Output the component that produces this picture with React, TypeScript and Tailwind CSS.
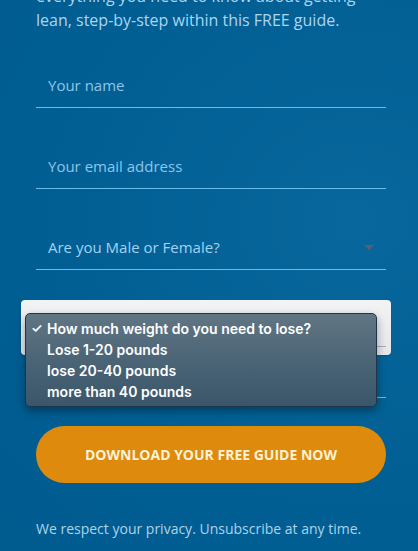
import { useState } from "react";

const weightOptions = [
    "How much weight do you need to lose?",
    "Lose 1-20 pounds",
    "lose 20-40 pounds",
    "more than 40 pounds",
];

export default function App() {
    const [name, setName] = useState("");
    const [email, setEmail] = useState("");
    const [gender, setGender] = useState("");

    return (
        <div
            className="min-h-screen w-full overflow-hidden bg-[radial-gradient(ellipse_at_85%_40%,#08679c_0%,#015f94_55%,#005b8f_100%)] pl-9 pr-8"
            style={{ fontFamily: '"Open Sans", "Noto Sans", sans-serif' }}
        >
            <p className="-mt-[16px] text-[16px] leading-6 text-[#acd5f0]">
                everything you need to know about getting lean, step-by-step within this FREE guide.
            </p>

            <form className="mt-[31px] flex flex-col" onSubmit={(e) => e.preventDefault()}>
                <input
                    type="text"
                    value={name}
                    onChange={(e) => setName(e.target.value)}
                    placeholder="Your name"
                    className="h-[45px] w-full border-b border-[#6cbbea] bg-transparent pl-3 text-[15px] text-[#cfe8f8] outline-none placeholder:text-[#8cc6ea]"
                />
                <input
                    type="email"
                    value={email}
                    onChange={(e) => setEmail(e.target.value)}
                    placeholder="Your email address"
                    className="mt-9 h-[45px] w-full border-b border-[#6cbbea] bg-transparent pl-3 text-[15px] text-[#cfe8f8] outline-none placeholder:text-[#8cc6ea]"
                />
                <div className="relative mt-9 h-[45px] border-b border-[#6cbbea]">
                    <select
                        value={gender}
                        onChange={(e) => setGender(e.target.value)}
                        className="h-full w-full appearance-none bg-transparent pl-3 text-[15px] text-[#a3d2f1] outline-none"
                    >
                        <option value="">Are you Male or Female?</option>
                        <option value="male">Male</option>
                        <option value="female">Female</option>
                    </select>
                    <span className="pointer-events-none absolute right-3 top-[20px] h-0 w-0 border-l-[5px] border-r-[5px] border-t-[5px] border-l-transparent border-r-transparent border-t-[#84585a] opacity-70 blur-[0.6px]" />
                </div>

                {/* weight select, open */}
                <div className="relative mt-9 h-[45px]">
                    <div className="absolute -left-[15px] -right-[5px] -top-[6px] -bottom-[4px] rounded-[4px] bg-[linear-gradient(180deg,#f2f3f5,#e4e6e9)] shadow-[0_1px_2px_rgba(0,0,0,0.15)]">
                        <div className="absolute left-[15px] right-[5px] top-[46px] h-px bg-[#a8adb3]" />
                    </div>
                    <div
                        className="absolute -left-[11px] top-[7px] z-10 w-[352px] rounded-[5px] border border-[#1f3547] bg-[linear-gradient(180deg,#617684_0%,#4b6476_50%,#3b566b_100%)] py-[4px] shadow-[0_4px_10px_rgba(0,0,0,0.35)]"
                        style={{ fontFamily: 'Inter, "Liberation Sans", sans-serif' }}
                    >
                        {weightOptions.map((opt, i) => (
                            <div key={opt} className="flex h-[21px] items-center text-[14px] font-semibold text-white">
                                <span className="w-[21px] pl-[5px] text-[13px]">{i === 0 ? "✓" : ""}</span>
                                <span>{opt}</span>
                            </div>
                        ))}
                    </div>
                </div>

                <div className="relative mt-[1px] h-[46px] border-b border-[#6cbbea]">
                    <span className="absolute left-[167px] top-[40px] h-[15px] w-[15px] rounded-full border-2 border-[#d7e9f4]" />
                </div>

                <button
                    type="submit"
                    className="mt-[28px] h-[57px] w-full rounded-full bg-[#de8a0c] text-[14px] font-bold text-[#fdf1d6]"
                >
                    DOWNLOAD YOUR FREE GUIDE NOW
                </button>
            </form>

            <p className="mt-[34px] text-[14px] leading-6 text-[#aed3ea]">
                We respect your privacy. Unsubscribe at any time.
            </p>
        </div>
    );
}
